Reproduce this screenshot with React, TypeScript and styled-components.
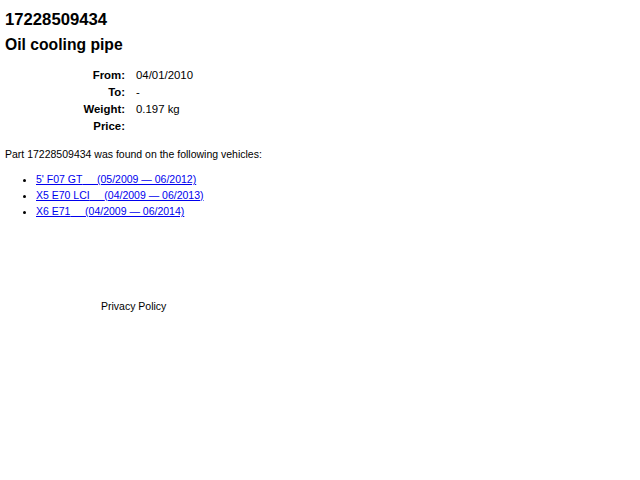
import React from 'react';
import styled, { createGlobalStyle } from 'styled-components';

type Vehicle = { model: string; period: string };

const vehicles: Vehicle[] = [
  { model: "5' F07 GT", period: '(05/2009 — 06/2012)' },
  { model: 'X5 E70 LCI', period: '(04/2009 — 06/2013)' },
  { model: 'X6 E71', period: '(04/2009 — 06/2014)' },
];

const specs = [
  { label: 'From:', value: '04/01/2010' },
  { label: 'To:', value: '-' },
  { label: 'Weight:', value: '0.197 kg' },
  { label: 'Price:', value: '' },
];

const gap = '\u00a0'.repeat(5);

const App: React.FC = () => {
  return (
    <>
      <GlobalStyle />
      <Page>
        <PartNumber>17228509434</PartNumber>
        <PartName>Oil cooling pipe</PartName>
        <Specs>
          {specs.map((s) => (
            <React.Fragment key={s.label}>
              <SpecLabel>{s.label}</SpecLabel>
              <SpecValue>{s.value}</SpecValue>
            </React.Fragment>
          ))}
        </Specs>
        <Intro>Part 17228509434 was found on the following vehicles:</Intro>
        <VehicleList>
          {vehicles.map((v) => (
            <li key={v.model}>
              <VehicleLink href="#">
                {v.model}
                {gap}
                {v.period}
              </VehicleLink>
            </li>
          ))}
        </VehicleList>
        <Footer>
          <FooterLink href="#">Privacy Policy</FooterLink>
        </Footer>
      </Page>
    </>
  );
};

const GlobalStyle = createGlobalStyle`
  body {
    margin: 0;
    background: #fff;
    color: #000;
    font-family: "Liberation Sans", Arial, sans-serif;
  }
`;

const Page = styled.div`
  padding: 8px 5px;
`;

const PartNumber = styled.h1`
  margin: 0;
  font-size: 16.7px;
  line-height: 24px;
  font-weight: 700;
`;

const PartName = styled.h2`
  margin: 0;
  padding-top: 1px;
  font-size: 15.7px;
  line-height: 24px;
  font-weight: 700;
`;

const Specs = styled.div`
  display: grid;
  grid-template-columns: 120px auto;
  column-gap: 11px;
  margin-top: 10px;
  font-size: 11.4px;
  line-height: 17px;
`;

const SpecLabel = styled.div`
  text-align: right;
  font-weight: 700;
`;

const SpecValue = styled.div`
  min-height: 17px;
`;

const Intro = styled.p`
  margin: 11px 0 0;
  font-size: 10.5px;
  line-height: 16px;
`;

const VehicleList = styled.ul`
  margin: 9px 0 0;
  padding-left: 31px;
  font-size: 10.5px;
  line-height: 16px;
`;

const VehicleLink = styled.a`
  color: #00e;
  text-decoration: underline;
`;

const Footer = styled.div`
  margin-top: 79px;
  padding-left: 96px;
  font-size: 10.5px;
  line-height: 16px;
`;

const FooterLink = styled.a`
  color: #000;
  text-decoration: none;
`;

export default App;
